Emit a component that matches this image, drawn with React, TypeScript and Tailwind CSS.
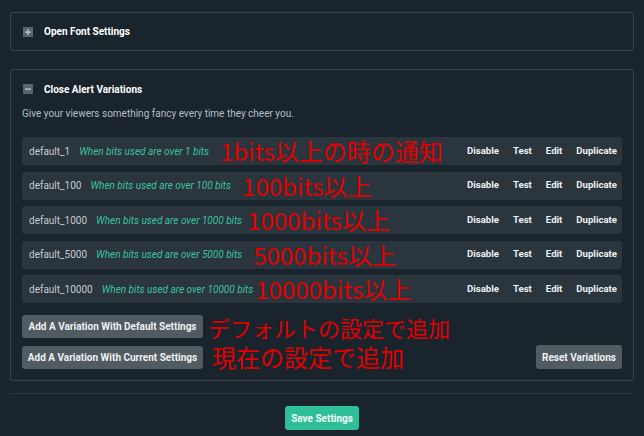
import React from 'react';

const variations = [
  { name: 'default_1', desc: 'When bits used are over 1 bits', note: '1bits以上の時の通知', gap: 'ml-[11px]' },
  { name: 'default_100', desc: 'When bits used are over 100 bits', note: '100bits以上', gap: 'ml-[11px]' },
  { name: 'default_1000', desc: 'When bits used are over 1000 bits', note: '1000bits以上', gap: 'ml-[5px]' },
  { name: 'default_5000', desc: 'When bits used are over 5000 bits', note: '5000bits以上', gap: 'ml-[11px]' },
  { name: 'default_10000', desc: 'When bits used are over 10000 bits', note: '10000bits以上', gap: 'ml-[2px]' },
];

const Note = ({ text, className = '' }: { text: string; className?: string }) => (
  <span
    className={`leading-[20px] text-[#e00000] whitespace-nowrap ${className}`}
    style={{ fontFamily: '"Noto Sans CJK JP", sans-serif' }}
  >
    {text}
  </span>
);

const ToggleIcon = ({ open }: { open: boolean }) => (
  <span className="w-[10px] h-[10px] bg-[#5a646c] flex items-center justify-center">
    <svg width="6" height="6" viewBox="0 0 6 6">
      <rect x="0" y="2.5" width="6" height="1.2" fill="#c9cfd3" />
      {!open && <rect x="2.4" y="0" width="1.2" height="6" fill="#c9cfd3" />}
    </svg>
  </span>
);

const App = () => {
  return (
    <div
      className="w-[644px] h-[436px] bg-[#19242d] px-[10px] pt-[12px] text-white overflow-hidden"
      style={{ fontFamily: 'Roboto, "Liberation Sans", sans-serif' }}
    >
      {/* font settings (collapsed) */}
      <div className="h-[39px] border border-[#38444e] rounded-[3px] flex items-center pl-[12px]">
        <ToggleIcon open={false} />
        <span className="ml-[11px] text-[10px] font-bold">Open Font Settings</span>
      </div>

      {/* alert variations */}
      <div className="mt-[18px] border border-[#38444e] rounded-[3px] px-[11px] pb-[11px]">
        <div className="h-[38px] flex items-center pl-[1px]">
          <ToggleIcon open={true} />
          <span className="ml-[11px] text-[10px] font-bold">Close Alert Variations</span>
        </div>
        <p className="text-[10px] leading-[12px] text-[#b7bfc5]">
          Give your viewers something fancy every time they cheer you.
        </p>

        <div className="mt-[17px] flex flex-col gap-[6.5px]">
          {variations.map((v) => (
            <div key={v.name} className="h-[28px] bg-[#2a353d] rounded-[3px] flex items-center pl-[7px] pr-[5px]">
              <span className="text-[10px] text-[#c5ccd1]">{v.name}</span>
              <span className="ml-[9px] text-[10px] italic text-[#3cc39f]">{v.desc}</span>
              <Note text={v.note} className={`text-[24px] ${v.gap}`} />
              <div className="ml-auto flex items-center gap-[14px] text-[9.6px] font-bold text-[#eef1f3]">
                <span>Disable</span>
                <span>Test</span>
                <span>Edit</span>
                <span>Duplicate</span>
              </div>
            </div>
          ))}
        </div>

        <div className="mt-[12px] flex items-center">
          <button className="h-[23px] w-[181px] bg-[#505b62] rounded-[3px] text-[10px] font-bold text-[#eef1f3]">
            Add A Variation With Default Settings
          </button>
          <Note text="デフォルトの設定で追加" className="text-[22px] ml-[5px]" />
        </div>
        <div className="mt-[7px] flex items-center">
          <button className="h-[23px] w-[181px] bg-[#505b62] rounded-[3px] text-[10px] font-bold text-[#eef1f3]">
            Add A Variation With Current Settings
          </button>
          <Note text="現在の設定で追加" className="text-[24px] ml-[9px]" />
          <button className="ml-auto h-[24px] w-[86px] bg-[#505b62] rounded-[3px] text-[10px] font-bold text-[#eef1f3]">
            Reset Variations
          </button>
        </div>
      </div>

      <div className="mt-[12px] h-[1px] bg-[#2c3841]" />

      <div className="mt-[12px] flex justify-center">
        <button className="h-[24px] w-[74px] bg-[#2fbf98] rounded-[3px] text-[10px] font-bold text-[#f3fbf8]">
          Save Settings
        </button>
      </div>
    </div>
  );
};

export default App;
